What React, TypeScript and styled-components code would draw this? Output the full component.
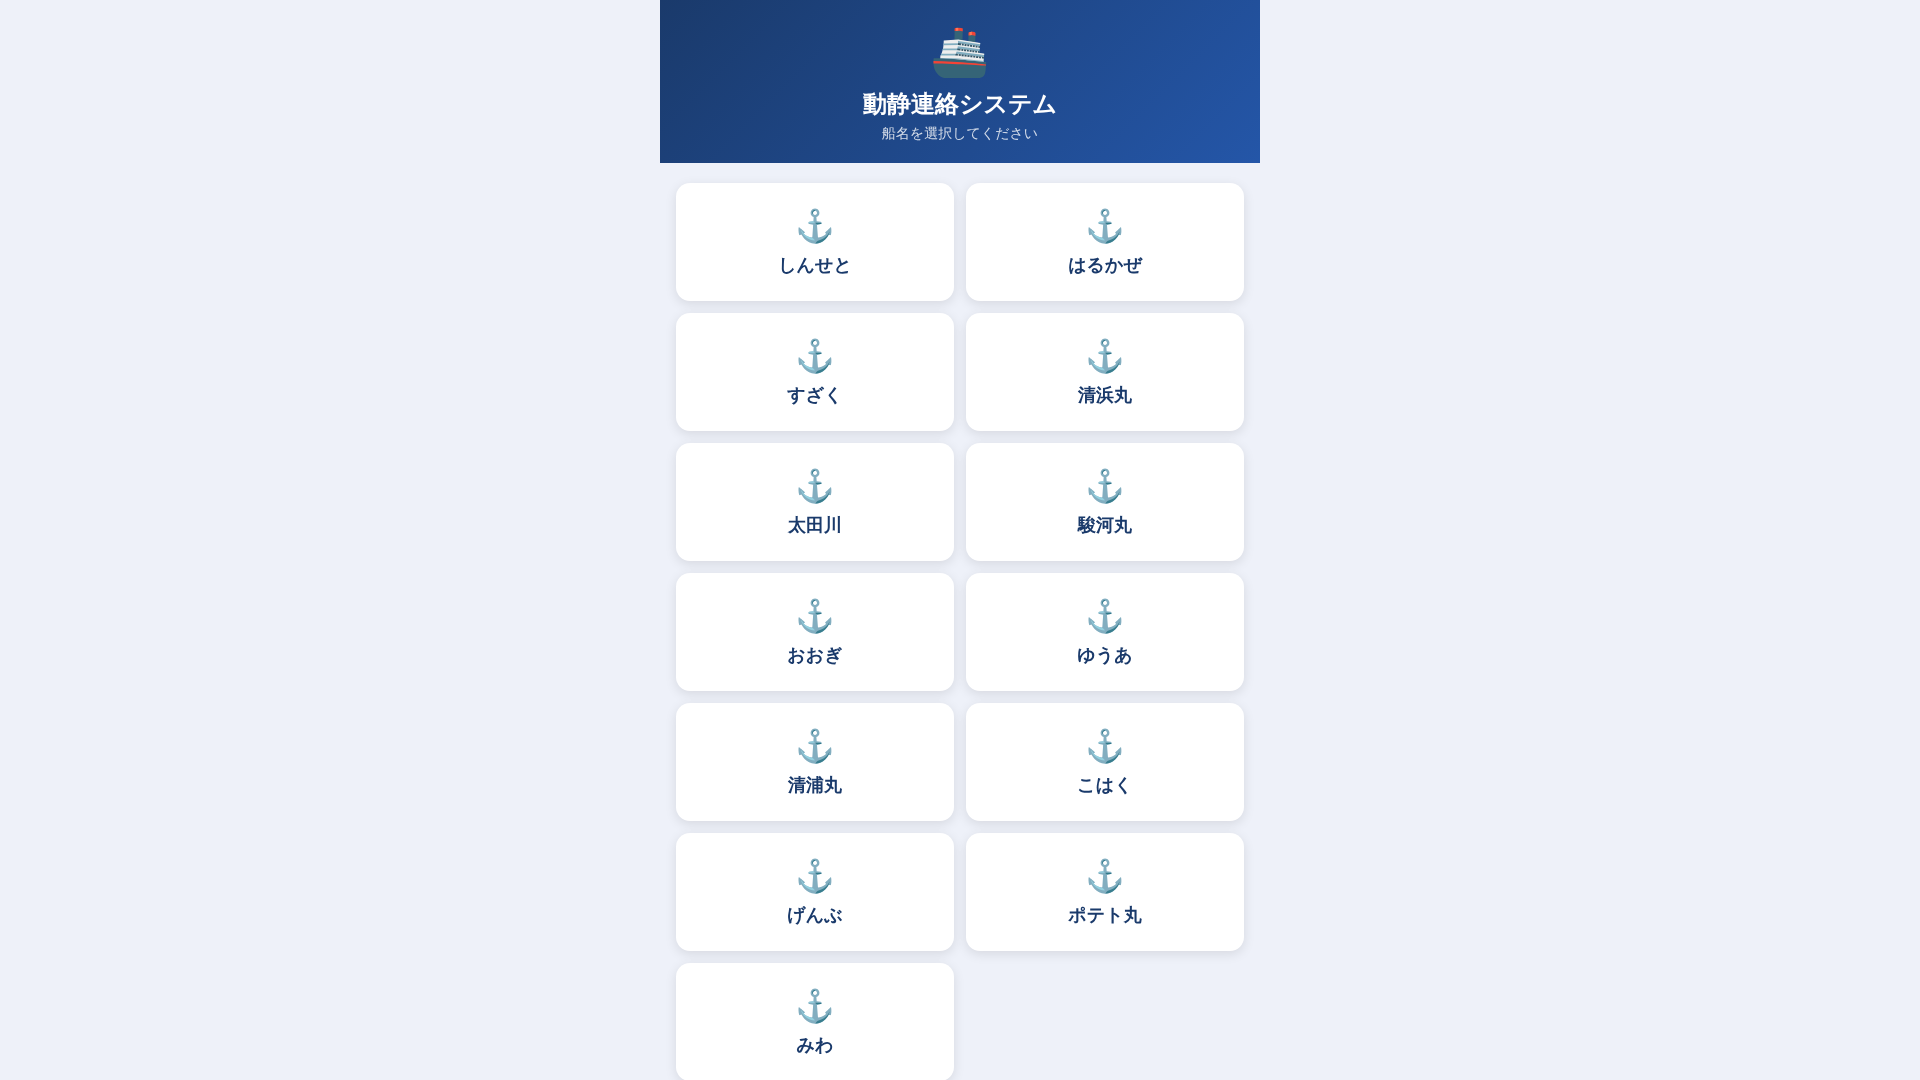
import React from "react";
import styled, { createGlobalStyle } from "styled-components";

const ships = ["しんせと", "はるかぜ", "すざく", "清浜丸", "太田川", "駿河丸", "おおぎ", "ゆうあ", "清浦丸", "こはく", "げんぶ", "ポテト丸", "みわ"];

const GlobalStyle = createGlobalStyle`
  * { box-sizing: border-box; margin: 0; padding: 0; }
  html { scrollbar-width: none; }
  body {
    background: #eef1f9;
    font-family: "Liberation Sans", "WenQuanYi Zen Hei", "Noto Sans CJK JP", sans-serif;
  }
`;

const Page = styled.div`
  max-width: 600px;
  min-height: 100vh;
  margin: 0 auto;
`;

const Header = styled.header`
  padding: 24px 20px 20px;
  background: linear-gradient(135deg, #1a3a6b, #2456a8);
  color: #fff;
  text-align: center;
`;

const Logo = styled.div`
  margin-bottom: 8px;
  font-size: 48px;
  line-height: 56px;
`;

const Title = styled.h1`
  font-size: 24px;
  line-height: 31px;
  font-weight: 800;
`;

const Subtitle = styled.p`
  margin-top: 4px;
  font-size: 14px;
  line-height: 20px;
  opacity: 0.8;
`;

const Grid = styled.main`
  display: grid;
  grid-template-columns: 1fr 1fr;
  gap: 12px;
  padding: 20px 16px;
`;

const ShipButton = styled.button`
  display: flex;
  flex-direction: column;
  align-items: center;
  gap: 6px;
  padding: 22px 14px 24px;
  border: none;
  border-radius: 14px;
  background: #fff;
  box-shadow: 0 3px 12px rgba(0, 0, 0, 0.1);
  color: #1a3a6b;
  font-family: inherit;
  cursor: pointer;
`;

const Anchor = styled.span`
  font-size: 32px;
  line-height: 42px;
`;

const ShipName = styled.span`
  font-size: 18px;
  line-height: 24px;
  font-weight: 800;
`;

export default function App() {
  return (
    <>
      <GlobalStyle />
      <Page>
        <Header>
          <Logo aria-hidden="true">🚢</Logo>
          <Title>動静連絡システム</Title>
          <Subtitle>船名を選択してください</Subtitle>
        </Header>
        <Grid>
          {ships.map((name) => (
            <ShipButton key={name} type="button">
              <Anchor aria-hidden="true">⚓</Anchor>
              <ShipName>{name}</ShipName>
            </ShipButton>
          ))}
        </Grid>
      </Page>
    </>
  );
}
